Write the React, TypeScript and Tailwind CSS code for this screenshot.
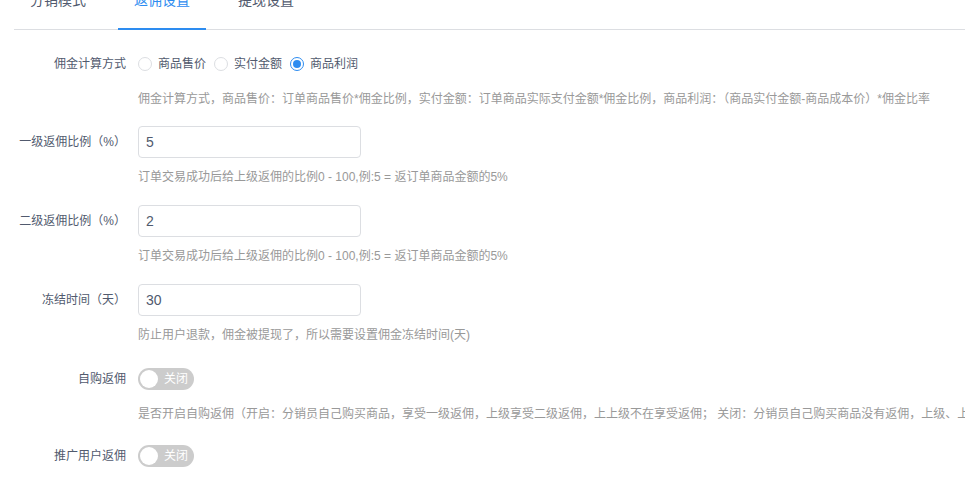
import { useState } from "react";

const tabs = ["分销模式", "返佣设置", "提现设置"];

const FormItem = ({
  label,
  help,
  children,
  className = "",
}: {
  label: string;
  help?: string;
  children: React.ReactNode;
  className?: string;
}) => (
  <div className={`flex ${className}`}>
    <label className="w-[124px] h-8 shrink-0 flex items-center justify-end pr-3 text-[12px] text-[#515a6e] whitespace-nowrap">
      {label}
    </label>
    <div className="flex flex-col">
      <div className="h-8 flex items-center">{children}</div>
      {help && (
        <p className="mt-[9px] leading-[20px] text-[12px] text-[#999] whitespace-nowrap">{help}</p>
      )}
    </div>
  </div>
);

const Radio = ({ label, checked, onClick }: { label: string; checked: boolean; onClick: () => void }) => (
  <span className="flex items-center mr-2 cursor-pointer" onClick={onClick}>
    <span
      className={`w-[14px] h-[14px] rounded-full border bg-white flex items-center justify-center ${
        checked ? "border-[#2d8cf0]" : "border-[#dcdee2]"
      }`}
    >
      {checked && <span className="w-[8px] h-[8px] rounded-full bg-[#2d8cf0]" />}
    </span>
    <span className="ml-[6px] text-[12px] text-[#515a6e]">{label}</span>
  </span>
);

const Switch = ({ on, onClick }: { on: boolean; onClick: () => void }) => (
  <button
    onClick={onClick}
    className={`relative w-[56px] h-[22px] rounded-full flex items-center ${on ? "bg-[#2d8cf0]" : "bg-[#ccc]"}`}
  >
    <span
      className={`absolute top-[2px] w-[18px] h-[18px] rounded-full bg-white ${on ? "left-[36px]" : "left-[2px]"}`}
    />
    <span className={`text-[12px] text-white leading-none ${on ? "ml-[8px]" : "ml-[26px]"}`}>
      {on ? "开启" : "关闭"}
    </span>
  </button>
);

const Input = ({ value }: { value: string }) => (
  <input
    defaultValue={value}
    className="w-[223px] h-8 px-[7px] border border-[#dcdee2] rounded-[4px] text-[14px] text-[#515a6e] outline-none bg-white"
  />
);

export default function App() {
  const [active] = useState(1);
  const [mode, setMode] = useState(2);
  const [selfBuy, setSelfBuy] = useState(false);
  const [promote, setPromote] = useState(false);

  return (
    <div className="w-[965px] h-[485px] overflow-hidden bg-white font-['Liberation_Sans','Noto_Sans_CJK_SC',sans-serif]">
      <div className="pl-[14px]">
        {/* tab bar, scrolled partly out of view */}
        <div className="-mt-[10px] flex border-b border-[#dcdee2]">
          {tabs.map((t, i) => (
            <div
              key={t}
              className={`relative px-4 mr-4 pb-[19px] leading-[20px] text-[14px] ${
                i === active ? "text-[#2d8cf0]" : "text-[#515a6e]"
              }`}
            >
              {t}
              {i === active && <span className="absolute left-0 right-0 -bottom-px h-[2px] bg-[#2d8cf0]" />}
            </div>
          ))}
        </div>

        <div className="mt-[18px]">
          <FormItem
            label="佣金计算方式"
            className="mb-[17px]"
            help="佣金计算方式，商品售价：订单商品售价*佣金比例，实付金额：订单商品实际支付金额*佣金比例，商品利润：（商品实付金额-商品成本价）*佣金比率"
          >
            {["商品售价", "实付金额", "商品利润"].map((r, i) => (
              <Radio key={r} label={r} checked={mode === i} onClick={() => setMode(i)} />
            ))}
          </FormItem>
          <FormItem
            label="一级返佣比例（%）"
            className="mb-[18px]"
            help="订单交易成功后给上级返佣的比例0 - 100,例:5 = 返订单商品金额的5%"
          >
            <Input value="5" />
          </FormItem>
          <FormItem
            label="二级返佣比例（%）"
            className="mb-[18px]"
            help="订单交易成功后给上级返佣的比例0 - 100,例:5 = 返订单商品金额的5%"
          >
            <Input value="2" />
          </FormItem>
          <FormItem
            label="冻结时间（天）"
            className="mb-[18px]"
            help="防止用户退款，佣金被提现了，所以需要设置佣金冻结时间(天)"
          >
            <Input value="30" />
          </FormItem>
          <FormItem
            label="自购返佣"
            className="mb-[16px]"
            help="是否开启自购返佣（开启：分销员自己购买商品，享受一级返佣，上级享受二级返佣，上上级不在享受返佣； 关闭：分销员自己购买商品没有返佣，上级、上上级分别享受一级、二级返佣）"
          >
            <Switch on={selfBuy} onClick={() => setSelfBuy(!selfBuy)} />
          </FormItem>
          <FormItem label="推广用户返佣">
            <Switch on={promote} onClick={() => setPromote(!promote)} />
          </FormItem>
        </div>
      </div>
    </div>
  );
}
